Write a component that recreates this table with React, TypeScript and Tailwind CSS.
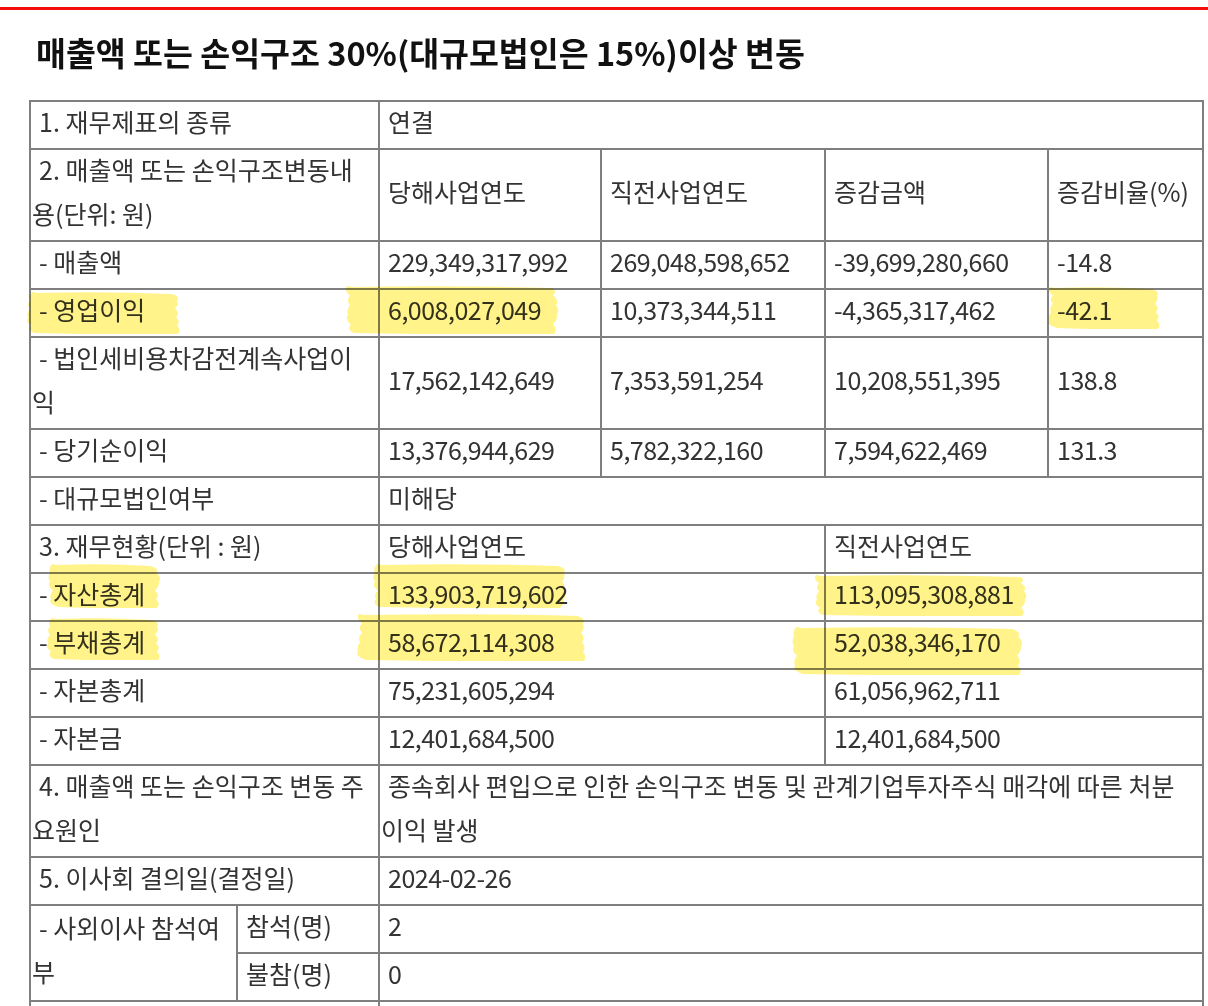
import React from "react";

const FONT = '"Noto Sans CJK KR", "Noto Sans", sans-serif';

function wavy(w: number, h: number, seed: number) {
  const n = 5;
  const l = [3, 0, 4, 1, 3, 0].map((v, i) => ((v + seed + i) % 5));
  const r = [1, 4, 0, 3, 1, 4].map((v, i) => ((v + seed * 2 + i) % 5));
  let d = `M ${8 + l[0]} 1 Q ${w / 2} ${-1} ${w - 8 - r[0]} 2`;
  for (let i = 1; i <= n; i++) {
    const y = (h * i) / n;
    const ym = (h * (i - 0.5)) / n;
    d += ` Q ${w - r[i] * 0.6} ${ym} ${w - 3 - r[i]} ${y}`;
  }
  d += ` Q ${w / 2} ${h + 1} ${8 + l[n]} ${h - 1}`;
  for (let i = n - 1; i >= 0; i--) {
    const y = (h * i) / n;
    const ym = (h * (i + 0.5)) / n;
    d += ` Q ${l[i] * 0.6} ${ym} ${3 + l[i]} ${y}`;
  }
  d += " Z";
  return d;
}

// Hand-drawn highlighter strokes lying over the table
function Mark({ x, y, w, h, s }: { x: number; y: number; w: number; h: number; s: number }) {
  return (
    <svg
      className="absolute pointer-events-none mix-blend-multiply"
      style={{ left: x, top: y, width: w, height: h }}
      width={w}
      height={h}
      viewBox={`0 0 ${w} ${h}`}
    >
      <path d={wavy(w, h, s)} fill="#fff389" />
    </svg>
  );
}

const base = "border-2 border-[#7f7f7f] pl-px pr-[8px] pt-0 pb-[2px] align-middle indent-[7px] leading-[44px]";

function C({
  children,
  span,
  rows,
  num,
}: {
  children: React.ReactNode;
  span?: number;
  rows?: number;
  num?: boolean;
}) {
  return (
    <td colSpan={span} rowSpan={rows} className={num ? base + " tracking-[-0.5px]" : base}>
      <div className="-mt-[3px] mb-[3px]">{children}</div>
    </td>
  );
}

const marks = [
  { x: 25, y: 292, w: 157, h: 42, s: 1 },
  { x: 344, y: 286, w: 216, h: 48, s: 2 },
  { x: 1046, y: 287, w: 115, h: 42, s: 3 },
  { x: 47, y: 564, w: 115, h: 44, s: 4 },
  { x: 371, y: 564, w: 196, h: 44, s: 0 },
  { x: 813, y: 575, w: 215, h: 41, s: 2 },
  { x: 45, y: 618, w: 117, h: 42, s: 1 },
  { x: 355, y: 614, w: 232, h: 47, s: 3 },
  { x: 791, y: 627, w: 233, h: 48, s: 4 },
];

export default function App() {
  return (
    <div className="relative w-[1208px] min-h-[1006px] bg-white overflow-hidden" style={{ fontFamily: FONT }}>
      <div className="pt-[7px]">
        <div className="h-[3px] bg-[#f50d0d]" />
      </div>
      <h1 className="mt-[22px] ml-[36px] h-[44px] leading-[40px] text-[32.5px] font-bold text-[#111]">
        매출액 또는 손익구조 30%(대규모법인은 15%)이상 변동
      </h1>
      <table className="mt-[24px] ml-[29px] w-[1173px] table-fixed border-collapse text-[25px] text-[#333]">
        <colgroup>
          <col className="w-[207px]" />
          <col className="w-[142px]" />
          <col className="w-[222px]" />
          <col className="w-[224px]" />
          <col className="w-[223px]" />
          <col className="w-[155px]" />
        </colgroup>
        <tbody>
          <tr>
            <C span={2}>1. 재무제표의 종류</C>
            <C span={4}>연결</C>
          </tr>
          <tr>
            <C span={2}>2. 매출액 또는 손익구조변동내용(단위: 원)</C>
            <C>당해사업연도</C>
            <C>직전사업연도</C>
            <C>증감금액</C>
            <C>증감비율(%)</C>
          </tr>
          <tr>
            <C span={2}>- 매출액</C>
            <C num>229,349,317,992</C>
            <C num>269,048,598,652</C>
            <C num>-39,699,280,660</C>
            <C num>-14.8</C>
          </tr>
          <tr>
            <C span={2}>- 영업이익</C>
            <C num>6,008,027,049</C>
            <C num>10,373,344,511</C>
            <C num>-4,365,317,462</C>
            <C num>-42.1</C>
          </tr>
          <tr>
            <C span={2}>- 법인세비용차감전계속사업이익</C>
            <C num>17,562,142,649</C>
            <C num>7,353,591,254</C>
            <C num>10,208,551,395</C>
            <C num>138.8</C>
          </tr>
          <tr>
            <C span={2}>- 당기순이익</C>
            <C num>13,376,944,629</C>
            <C num>5,782,322,160</C>
            <C num>7,594,622,469</C>
            <C num>131.3</C>
          </tr>
          <tr>
            <C span={2}>- 대규모법인여부</C>
            <C span={4}>미해당</C>
          </tr>
          <tr>
            <C span={2}>3. 재무현황(단위 : 원)</C>
            <C span={2}>당해사업연도</C>
            <C span={2}>직전사업연도</C>
          </tr>
          <tr>
            <C span={2}>- 자산총계</C>
            <C span={2} num>133,903,719,602</C>
            <C span={2} num>113,095,308,881</C>
          </tr>
          <tr>
            <C span={2}>- 부채총계</C>
            <C span={2} num>58,672,114,308</C>
            <C span={2} num>52,038,346,170</C>
          </tr>
          <tr>
            <C span={2}>- 자본총계</C>
            <C span={2} num>75,231,605,294</C>
            <C span={2} num>61,056,962,711</C>
          </tr>
          <tr>
            <C span={2}>- 자본금</C>
            <C span={2} num>12,401,684,500</C>
            <C span={2} num>12,401,684,500</C>
          </tr>
          <tr>
            <C span={2}>4. 매출액 또는 손익구조 변동 주요원인</C>
            <C span={4}>
              종속회사 편입으로 인한 손익구조 변동 및 관계기업투자주식 매각에 따른 처분이익 발생
            </C>
          </tr>
          <tr>
            <C span={2}>5. 이사회 결의일(결정일)</C>
            <C span={4} num>2024-02-26</C>
          </tr>
          <tr>
            <C rows={2}>- 사외이사 참석여부</C>
            <C>참석(명)</C>
            <C span={4}>2</C>
          </tr>
          <tr>
            <C>불참(명)</C>
            <C span={4}>0</C>
          </tr>
          <tr>
            <C span={2}>{"\u00a0"}</C>
            <C span={4}>{"\u00a0"}</C>
          </tr>
        </tbody>
      </table>

      {marks.map((m, i) => (
        <Mark key={i} {...m} />
      ))}
    </div>
  );
}
